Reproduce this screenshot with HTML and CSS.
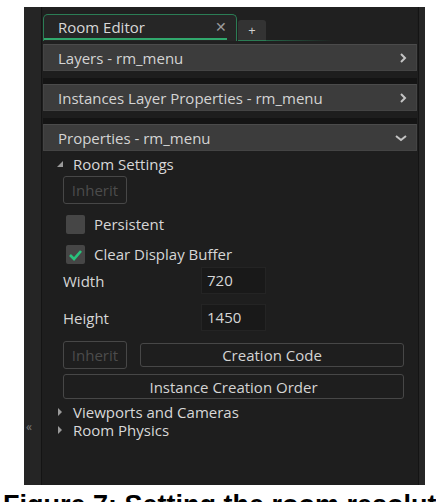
FILE: index.html
```html
<!DOCTYPE html>
<html lang="en">
<head>
    <meta charset="UTF-8">
    <meta name="viewport" content="width=device-width, initial-scale=1.0">
    <title>Room Editor</title>
    <link rel="stylesheet" href="styles.css">
</head>
<body>
    <div class="window">
        <div class="gutter"><span class="collapse">&laquo;</span></div>

        <div class="main">
            <div class="tabs">
                <div class="tab active">
                    <div class="tab-label">Room Editor <span class="close">&#x2715;</span></div>
                    <div class="tab-underline"></div>
                </div>
                <div class="tab add">+</div>
                <div class="tab-line"></div>
            </div>

            <div class="bar">
                <span>Layers - rm_menu</span>
                <svg class="chevron" width="10" height="12" viewBox="0 0 10 12"><polyline points="3,2 7,6 3,10" fill="none" stroke="#c4c4c4" stroke-width="2"/></svg>
            </div>
            <div class="split"></div>
            <div class="bar">
                <span>Instances Layer Properties - rm_menu</span>
                <svg class="chevron" width="10" height="12" viewBox="0 0 10 12"><polyline points="3,2 7,6 3,10" fill="none" stroke="#c4c4c4" stroke-width="2"/></svg>
            </div>
            <div class="split"></div>
            <div class="bar">
                <span>Properties - rm_menu</span>
                <svg class="chevron down" width="14" height="10" viewBox="0 0 14 10"><polyline points="2,3 7,7 12,3" fill="none" stroke="#c4c4c4" stroke-width="2"/></svg>
            </div>

            <div class="props">
                <div class="tree">
                    <svg class="twisty" width="18" height="10" viewBox="0 0 18 10"><polygon points="8,2 8,8 2,8" fill="#9a9a9a"/></svg>
                    Room Settings
                </div>
                <button class="btn inherit">Inherit</button>

                <div class="check">
                    <span class="box"></span>
                    Persistent
                </div>
                <div class="check second">
                    <span class="box">
                        <svg width="19" height="19" viewBox="0 0 19 19"><polyline points="4,10 8,14 15,6" fill="none" stroke="#29c27c" stroke-width="2.6"/></svg>
                    </span>
                    Clear Display Buffer
                </div>

                <div class="field">
                    <span class="label">Width</span>
                    <span class="input">720</span>
                </div>
                <div class="field next">
                    <span class="label">Height</span>
                    <span class="input">1450</span>
                </div>

                <div class="btn-row">
                    <button class="btn inherit">Inherit</button>
                    <button class="btn wide">Creation Code</button>
                </div>
                <button class="btn full">Instance Creation Order</button>

                <div class="tree small first">
                    <svg class="twisty" width="18" height="10" viewBox="0 0 18 10"><polygon points="3,1 7,5 3,9" fill="#9a9a9a"/></svg>
                    Viewports and Cameras
                </div>
                <div class="tree small">
                    <svg class="twisty" width="18" height="10" viewBox="0 0 18 10"><polygon points="3,1 7,5 3,9" fill="#9a9a9a"/></svg>
                    Room Physics
                </div>
            </div>
        </div>

        <div class="rail"></div>
    </div>

    <p class="caption">Figure 7: Setting the room resolution</p>
</body>
</html>
```

FILE: styles.css
```css
body {
    margin: 0;
    background-color: #fff;
    font-family: "Open Sans", "Noto Sans", sans-serif;
    font-size: 15px;
    color: #d6d6d6;
}

.window {
    display: flex;
    width: 401px;
    height: 478px;
    margin: 7px 0 0 24px;
    background-color: #1e1e1e;
}

.gutter {
    width: 15px;
    padding: 413px 0 0 2px;
    background-color: #252525;
    border-right: 1px solid #141414;
}

.collapse {
    display: block;
    font-size: 12px;
    line-height: 14px;
    color: #7a7a7a;
}

.rail {
    width: 6px;
    background-color: #262626;
    border-left: 1px solid #141414;
}

.main {
    flex: 1;
    display: flex;
    flex-direction: column;
    padding: 0 1px;
    background-color: #1e1e1e;
}

/* tabs */
.tabs {
    display: flex;
    align-items: flex-end;
    height: 37px;
    padding-bottom: 3px;
    box-sizing: border-box;
    background-color: #202020;
}

.tab {
    box-sizing: border-box;
}

.tab.active {
    display: flex;
    flex-direction: column;
    width: 194px;
    height: 27px;
    border: 1px solid #2b7d55;
    border-bottom: none;
    border-radius: 5px 5px 0 0;
    background-color: #262626;
}

.tab-label {
    flex: 1;
    display: flex;
    align-items: center;
    justify-content: space-between;
    padding: 0 9px 0 14px;
    color: #d8d8d8;
}

.close {
    font-size: 14px;
    color: #9a9a9a;
}

.tab-underline {
    height: 2px;
    margin: 0 9px 1px 0;
    background-color: #31a86d;
}

.tab.add {
    width: 28px;
    height: 21px;
    margin-left: 1px;
    border-radius: 3px 3px 0 0;
    border-bottom: 1px solid #2b7d55;
    background-color: #333;
    color: #d0d0d0;
    font-size: 13px;
    line-height: 20px;
    text-align: center;
}

.tab-line {
    flex: 1;
    height: 1px;
    background: linear-gradient(to right, #24694a, rgba(36, 105, 74, 0) 45%);
}

/* section headers */
.bar {
    display: flex;
    align-items: center;
    justify-content: space-between;
    height: 27px;
    padding: 0 8px 0 14px;
    box-sizing: border-box;
    background-color: #3c3c3c;
    border: 1px solid #444;
    border-top-color: #4b4b4b;
    color: #d4d4d4;
}

.split {
    height: 13px;
    background: linear-gradient(#1e1e1e 0 7px, #141414 7px);
}

/* properties body */
.props {
    padding: 0 13px 0 20px;
}

.tree {
    display: flex;
    align-items: center;
    height: 25px;
    margin-left: -8px;
    color: #d8d8d8;
}

.tree.small {
    height: 18px;
    line-height: 18px;
}

.tree.first {
    margin-top: 4px;
}

.twisty {
    flex: none;
}

.btn {
    display: block;
    padding: 0;
    box-sizing: border-box;
    font-family: inherit;
    font-size: 15px;
    color: #d4d4d4;
    background-color: transparent;
    border: 1px solid #474747;
    border-radius: 3px;
}

.btn.inherit {
    width: 64px;
    height: 28px;
    color: #4c4c4c;
}

.check {
    display: flex;
    align-items: center;
    gap: 9px;
    height: 24px;
    margin-top: 8px;
    padding-left: 3px;
}

.check.second {
    margin-top: 6px;
}

.box {
    width: 19px;
    height: 19px;
    border-radius: 2px;
    background-color: #464646;
}

.box svg {
    display: block;
}

.field {
    display: flex;
    align-items: center;
    height: 27px;
    margin-top: 1px;
}

.field.next {
    margin-top: 10px;
}

.label {
    width: 138px;
}

.input {
    width: 65px;
    height: 27px;
    box-sizing: border-box;
    padding-left: 5px;
    line-height: 25px;
    background-color: #191919;
    border: 1px solid #242424;
}

.btn-row {
    display: flex;
    align-items: center;
    height: 28px;
    margin-top: 10px;
}

.btn.wide {
    flex: 1;
    height: 24px;
    margin-left: 13px;
}

.btn.full {
    width: 100%;
    height: 25px;
    margin-top: 5px;
}

.caption {
    width: 433px;
    margin: 5px 0 0 3px;
    overflow: hidden;
    font-family: "Liberation Sans", Arial, sans-serif;
    font-weight: bold;
    font-size: 27px;
    line-height: 30px;
    color: #000;
    white-space: nowrap;
}
```
